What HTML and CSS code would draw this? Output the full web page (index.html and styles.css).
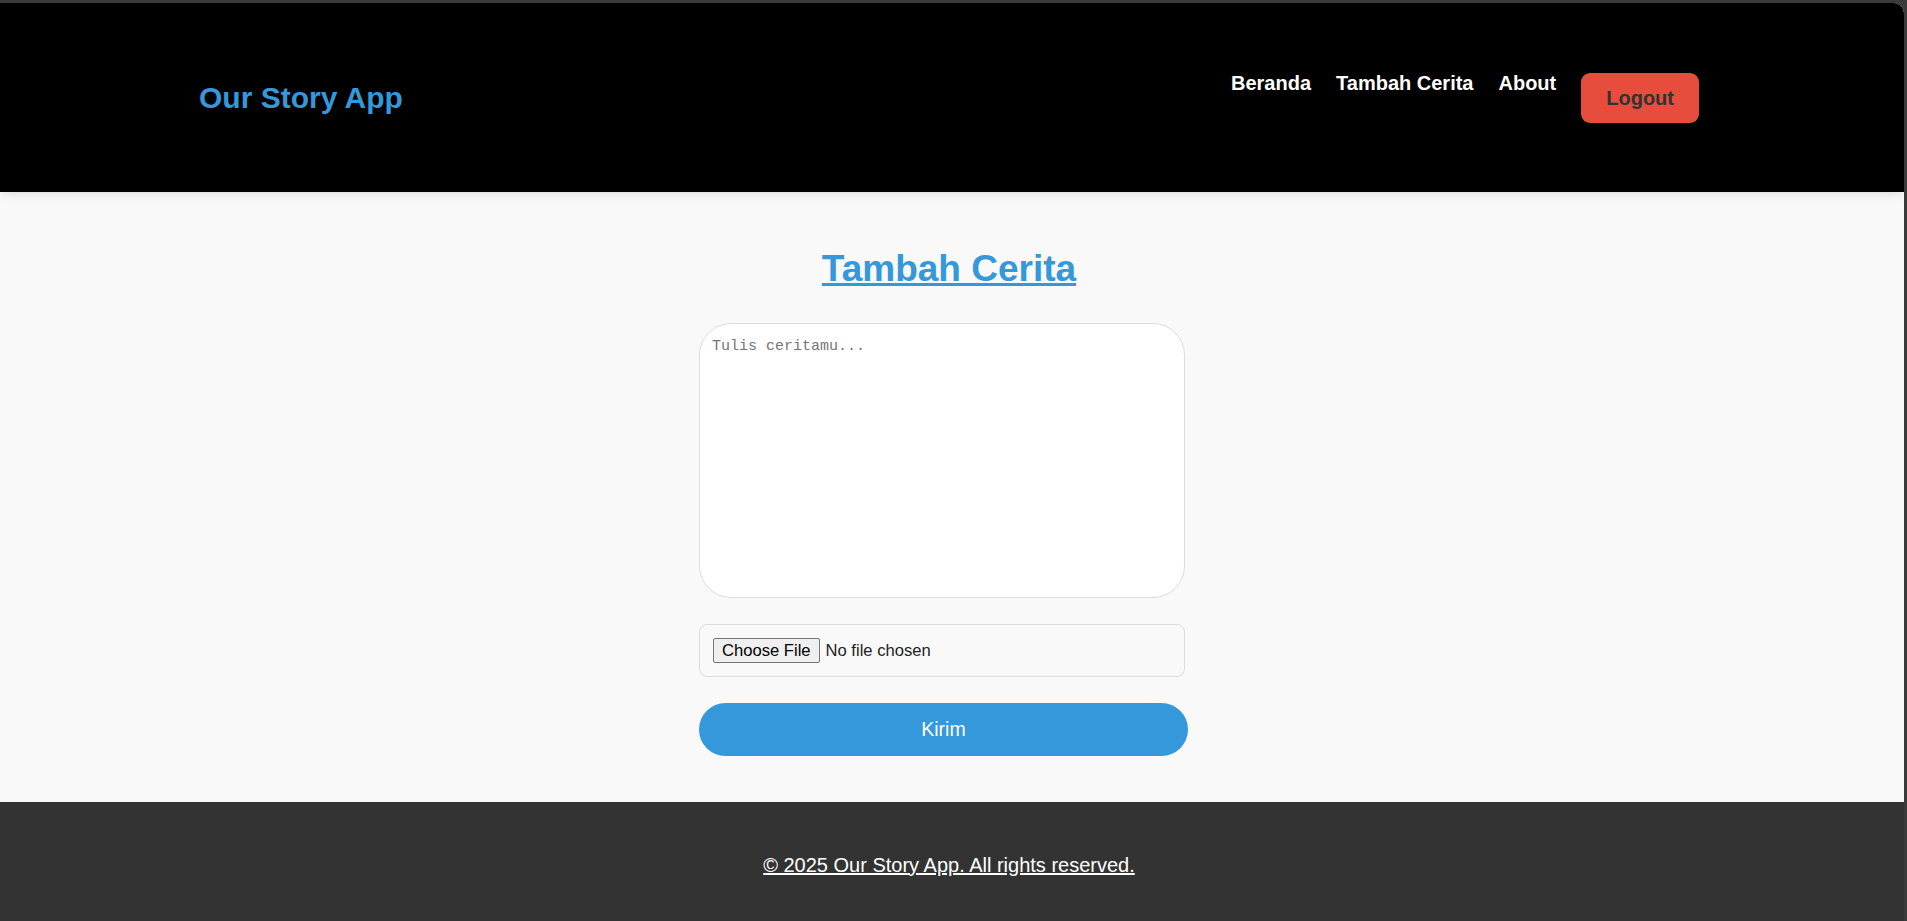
FILE: index.html
```html
<!DOCTYPE html>
<html lang="id">
<head>
<meta charset="utf-8">
<title>Our Story App</title>
<link rel="stylesheet" href="styles.css">
</head>
<body>
<div class="window">
  <header class="site-header">
    <a class="logo" href="#">Our Story App</a>
    <nav class="nav">
      <a class="nav-link" href="#">Beranda</a>
      <a class="nav-link" href="#">Tambah Cerita</a>
      <a class="nav-link" href="#">About</a>
      <button class="logout" type="button">Logout</button>
    </nav>
  </header>
  <main class="main">
    <h2 class="page-title"><a href="#">Tambah Cerita</a></h2>
    <form class="story-form">
      <textarea class="story-text" placeholder="Tulis ceritamu..."></textarea>
      <div class="file-box"><input class="file-input" type="file"></div>
      <button class="submit" type="button">Kirim</button>
    </form>
  </main>
  <footer class="site-footer">
    <a class="copyright" href="#">© 2025 Our Story App. All rights reserved.</a>
  </footer>
</div>
</body>
</html>
```
FILE: styles.css
```css
* { box-sizing: border-box; }
html, body {
  margin: 0;
  padding: 0;
  height: 100%;
  background: #3b3b3b;
  overflow: hidden;
}
body {
  font-family: "Liberation Sans", Arial, sans-serif;
}
.window {
  margin: 3px 3px 0 0;
  height: calc(100% - 3px);
  border-top-right-radius: 10px;
  overflow: hidden;
  background: #f9f9f9;
  display: flex;
  flex-direction: column;
}
.site-header {
  position: relative;
  z-index: 1;
  flex: none;
  height: 189px;
  background: #000;
  display: flex;
  align-items: center;
  justify-content: space-between;
  padding: 0 205px 0 199px;
  box-shadow: 0 2px 10px rgba(0, 0, 0, 0.12);
}
.logo {
  color: #3498db;
  font-size: 30px;
  font-weight: bold;
  text-decoration: none;
}
.nav {
  display: flex;
  align-items: flex-start;
  gap: 25px;
}
.nav-link {
  color: #fff;
  font-size: 20px;
  font-weight: bold;
  line-height: 23px;
  text-decoration: none;
}
.logout {
  margin-top: 1px;
  background: #e74c3c;
  color: #333;
  border: none;
  border-radius: 9px;
  font-family: inherit;
  font-size: 20px;
  font-weight: bold;
  line-height: 24px;
  padding: 13px 25px;
}
.main {
  flex: none;
  padding-right: 6px;
  display: flex;
  flex-direction: column;
  align-items: center;
}
.page-title {
  margin: 56px 0 32px;
  font-size: 37px;
  font-weight: bold;
  line-height: 42.5px;
}
.page-title a {
  color: #3498db;
  text-decoration: underline;
  text-decoration-thickness: 3px;
}
.story-form {
  width: 500px;
  margin-bottom: 46px;
  display: flex;
  flex-direction: column;
  align-items: flex-start;
  gap: 26px;
}
.story-text {
  display: block;
  width: 486px;
  height: 275.5px;
  margin: 0;
  border: 1px solid #ddd;
  border-radius: 32px;
  background: #fff;
  padding: 14px 12px;
  font-family: "Liberation Mono", monospace;
  font-size: 15px;
  resize: none;
  outline: none;
}
.story-text::placeholder {
  color: #757575;
}
.file-box {
  width: 486px;
  height: 53px;
  border: 1px solid #ddd;
  border-radius: 8px;
  padding: 13px;
  background: #f9f9f9;
}
.file-input {
  font-family: "Liberation Sans", Arial, sans-serif;
  font-size: 16.6px;
  color: #222;
  line-height: 19px;
}
.file-input::file-selector-button {
  font-family: inherit;
  font-size: 16.6px;
  line-height: 19px;
  padding: 2px 8px;
  margin: 0 6px 0 0;
  background: #efefef;
  color: #000;
  border: 1px solid #767676;
  border-radius: 2px;
}
.submit {
  width: 489px;
  height: 53px;
  border: none;
  border-radius: 27px;
  background: #3498db;
  color: #fff;
  font-family: inherit;
  font-size: 19.5px;
  padding: 0;
}
.site-footer {
  flex: 1;
  background: #333;
  padding: 52px 6px 44px 0;
  text-align: center;
}
.copyright {
  color: #fff;
  font-size: 20px;
  line-height: 23px;
  text-decoration: underline;
}
```
